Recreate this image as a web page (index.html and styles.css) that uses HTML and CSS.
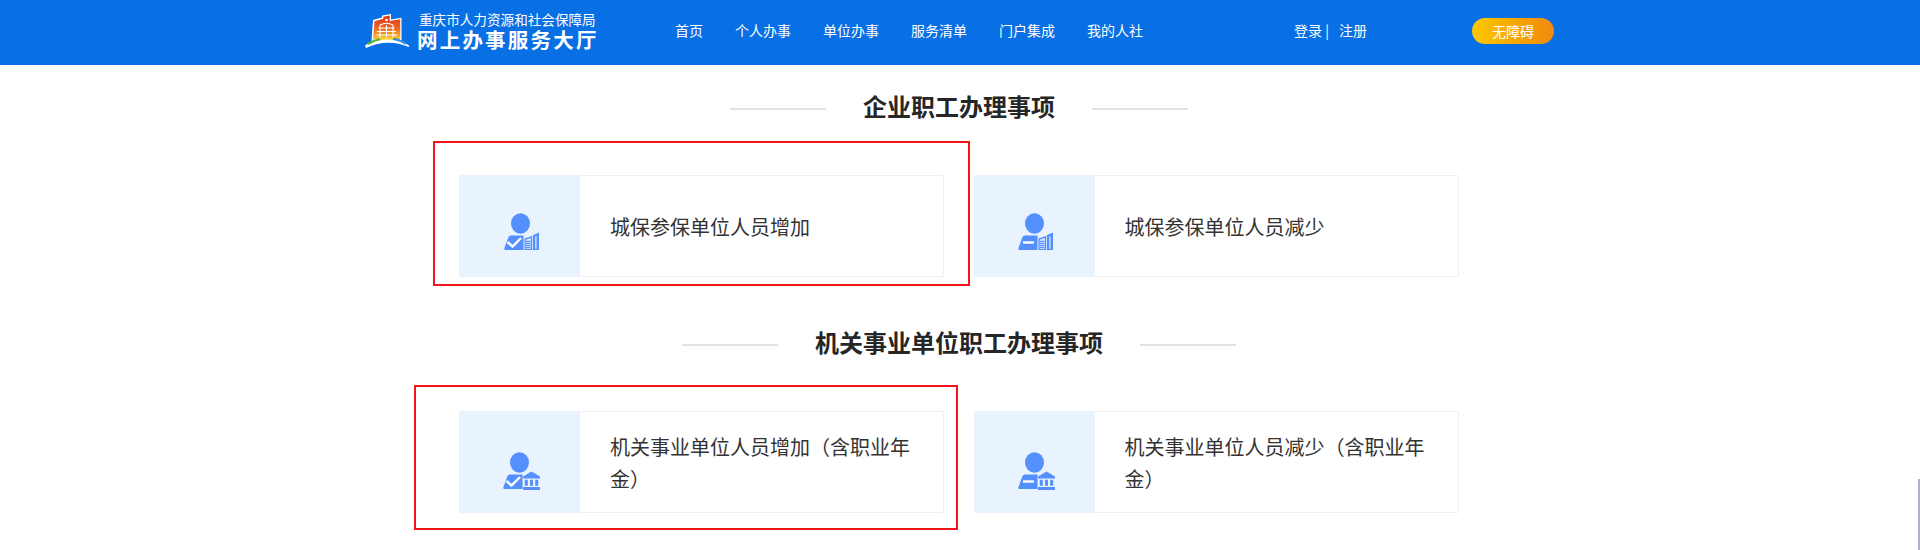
FILE: index.html
```html
<!DOCTYPE html>
<html lang="zh-CN">

<head>
    <meta charset="UTF-8">
    <meta name="viewport" content="width=device-width, initial-scale=1.0">
    <title>网上办事服务大厅</title>
    <link rel="stylesheet" href="styles.css">
</head>

<body>
    <svg class="icon-defs" width="0" height="0">
        <defs>
            <!-- person with a cut-out at the lower right, shared by all four icons -->
            <g id="person">
                <ellipse cx="16.500" cy="10.500" rx="9.500" ry="10.300" />
                <path d="M4.500 24 Q5 22.500 7 22.500 H19.500 V37 H1.500 Q0 37 0.300 35.500 Z" />
            </g>
            <g id="tower">
                <path d="M20.500 37 V25.500 L28 23 V37 Z M21.800 26.800 V35.800 H26.800 V25 Z" fill-rule="evenodd" />
                <path d="M22 28.300 H26.500 M22 30.300 H26.500 M22 32.300 H26.500 M22 34.300 H26.500" stroke="#5390fd" stroke-width="1.200" />
                <path d="M28.800 22.300 L35 19.500 V37 H28.800 Z M32.500 23 L31.300 23.500 V35.800 H32.500 Z" fill-rule="evenodd" />
            </g>
            <g id="bank">
                <path d="M28.500 19.500 L37 24.500 V26.500 H20 V24.500 Z" />
                <path d="M21.800 27.800 H24.800 V33.800 H21.800 Z M27 27.800 H30 V33.800 H27 Z M32.200 27.800 H35.200 V33.800 H32.200 Z M20 35 H37 V38 H20 Z" />
            </g>
        </defs>
    </svg>

    <header class="top-bar">
        <a class="logo" href="#">
            <svg class="logo-mark" viewBox="0 0 44 34">
                <defs>
                    <linearGradient id="flagGradient" x1="0" y1="0" x2="0" y2="1">
                        <stop offset="0" stop-color="#d9301f" />
                        <stop offset="0.55" stop-color="#ee6a22" />
                        <stop offset="1" stop-color="#fbc52c" />
                    </linearGradient>
                </defs>
                <path fill="#fff" d="M8 6 L17 3.500 V1.500 L26 0 V5.500 L36.500 3.800 V27 H6.500 Z" />
                <path fill="url(#flagGradient)" d="M9.500 7.300 L18.300 4.800 V2.700 L24.700 1.600 V7 L35.200 5.300 V25 H8 Z" />
                <circle cx="21.500" cy="6" r="1.300" fill="#fff" />
                <path fill="none" stroke="#fff" stroke-width="1.100" d="M15 11 Q21.500 7.500 28 11 M13.500 14 H29.500 M12 17.500 H31 M11 21 H32 M15 11 V24 M21.500 11 V24 M28 11 V24" />
                <path fill="#fff" d="M0 31.500 Q22 18 44 31.500 L44 33 Q22 24 1 34 Z" />
                <path fill="none" stroke="#5bb431" stroke-width="2.200" d="M3 30 Q9 26 16 24.800" />
                <path fill="none" stroke="#f6d233" stroke-width="2.200" d="M15 24.900 Q22 24 29 24.900" />
                <path fill="none" stroke="#2c8fe0" stroke-width="2.200" d="M28 24.800 Q36 26 41 30" />
            </svg>
            <span class="logo-text">
                <span class="logo-org">重庆市人力资源和社会保障局</span>
                <span class="logo-name">网上办事服务大厅</span>
            </span>
        </a>
        <nav class="main-nav">
            <a href="#">首页</a>
            <a href="#">个人办事</a>
            <a href="#">单位办事</a>
            <a href="#">服务清单</a>
            <a href="#">门户集成</a>
            <a href="#">我的人社</a>
        </nav>
        <div class="user-links"><a href="#">登录</a> | <a href="#" class="register">注册</a></div>
        <a class="access-btn" href="#">无障碍</a>
    </header>

    <main class="content">
        <div class="section-title">
            <span class="title-line"></span>
            <h2>企业职工办理事项</h2>
            <span class="title-line"></span>
        </div>
        <div class="card-grid">
            <a class="card" href="#">
                <span class="card-icon">
                    <svg viewBox="0 0 36 38" class="biz-icon">
                        <use href="#person" />
                        <use href="#tower" />
                        <path class="icon-cut" d="M3.500 29 L8.500 33.500 L17 25" />
                    </svg>
                </span>
                <span class="card-text">城保参保单位人员增加</span>
                <span class="mark mark-a"></span>
            </a>
            <a class="card" href="#">
                <span class="card-icon">
                    <svg viewBox="0 0 36 38" class="biz-icon">
                        <use href="#person" />
                        <use href="#tower" />
                        <path class="icon-cut" d="M5 29.500 H16" />
                    </svg>
                </span>
                <span class="card-text">城保参保单位人员减少</span>
            </a>
        </div>

        <div class="section-title section-next">
            <span class="title-line"></span>
            <h2>机关事业单位职工办理事项</h2>
            <span class="title-line"></span>
        </div>
        <div class="card-grid">
            <a class="card" href="#">
                <span class="card-icon bank-cell">
                    <svg viewBox="0 0 37 38" class="biz-icon bank-icon">
                        <use href="#person" />
                        <use href="#bank" />
                        <path class="icon-cut" d="M3.500 29 L8.500 33.500 L17 25" />
                    </svg>
                </span>
                <span class="card-text">机关事业单位人员增加（含职业年金）</span>
                <span class="mark mark-b"></span>
            </a>
            <a class="card" href="#">
                <span class="card-icon bank-cell">
                    <svg viewBox="0 0 37 38" class="biz-icon bank-icon">
                        <use href="#person" />
                        <use href="#bank" />
                        <path class="icon-cut" d="M5 29.500 H16" />
                    </svg>
                </span>
                <span class="card-text">机关事业单位人员减少（含职业年金）</span>
            </a>
        </div>
    </main>

    <div class="scroll-thumb"></div>
</body>

</html>
```

FILE: styles.css
```css
* {
    margin: 0;
    padding: 0;
    box-sizing: border-box;
}

html,
body {
    height: 100%;
    overflow: hidden;
    background: #fff;
    font-family: "Noto Sans CJK SC", "Noto Sans", sans-serif;
}

a {
    color: inherit;
    text-decoration: none;
}

.icon-defs {
    position: absolute;
}

/* top bar */
.top-bar {
    height: 65px;
    display: flex;
    align-items: center;
    padding: 0 0 3px 365px;
    background: #0870e4;
    color: #fff;
}

.logo {
    display: flex;
    align-items: center;
    gap: 8px;
    width: 310px;
}

.logo-mark {
    width: 44px;
    height: 34px;
    flex: none;
}

.logo-text {
    display: flex;
    flex-direction: column;
}

.logo-org {
    margin-left: 2px;
    font-size: 13.600px;
    line-height: 16px;
    white-space: nowrap;
}

.logo-name {
    font-size: 20.500px;
    line-height: 25px;
    font-weight: 700;
    letter-spacing: 2.200px;
    white-space: nowrap;
}

.main-nav {
    display: flex;
    gap: 32px;
    width: 619px;
    margin-bottom: 2px;
    font-size: 14px;
}

.user-links {
    width: 178px;
    margin-bottom: 2px;
    font-size: 14px;
    white-space: nowrap;
}

.register {
    margin-left: 7px;
}

.access-btn {
    width: 82px;
    height: 26px;
    display: flex;
    align-items: center;
    justify-content: center;
    border-radius: 13px;
    background: linear-gradient(90deg, #fcc800, #f08a0c);
    font-size: 14px;
}

/* sections */
.content {
    width: 1000px;
    margin-left: 459px;
    padding-top: 23px;
}

.section-title {
    height: 36px;
    display: flex;
    align-items: center;
    justify-content: center;
    gap: 37px;
    margin-bottom: 51px;
}

.section-next {
    margin-top: 47px;
}

.section-title h2 {
    font-size: 24px;
    line-height: 36px;
    font-weight: 700;
    color: #262626;
}

.title-line {
    width: 96px;
    height: 2px;
    margin-top: 6px;
    background: #e3e3e3;
}

.card-grid {
    display: grid;
    grid-template-columns: 485px 485.500px;
    gap: 29.500px;
}

.card {
    position: relative;
    height: 102px;
    display: flex;
    border: 1px solid #eeeff1;
    border-radius: 2px;
}

.card-icon {
    width: 121px;
    flex: none;
    display: flex;
    align-items: flex-end;
    justify-content: center;
    margin: -1px 0 -1px -1px;
    padding: 0 0 26px 4px;
    background: #e8f3fe;
    border-radius: 2px 0 0 2px;
}

.bank-cell {
    padding-bottom: 23px;
}

.biz-icon {
    width: 36px;
    height: 38px;
    fill: #5390fd;
}

.bank-icon {
    width: 37px;
}

.icon-cut {
    fill: none;
    stroke: #fff;
    stroke-width: 2.400;
}

.card-text {
    align-self: center;
    width: 320px;
    margin-left: 30px;
    padding-top: 2px;
    font-size: 20px;
    line-height: 32px;
    color: #333;
}

/* red annotation boxes laid over the screenshot */
.mark {
    position: absolute;
    border: 2px solid #f5141c;
    pointer-events: none;
}

.mark-a {
    top: -35px;
    right: -27px;
    bottom: -10px;
    left: -27px;
}

.mark-b {
    top: -27px;
    right: -15px;
    bottom: -18px;
    left: -46px;
}

.scroll-thumb {
    position: absolute;
    top: 479px;
    right: 0;
    width: 2px;
    height: 71px;
    background: #b0b1c8;
}
```
